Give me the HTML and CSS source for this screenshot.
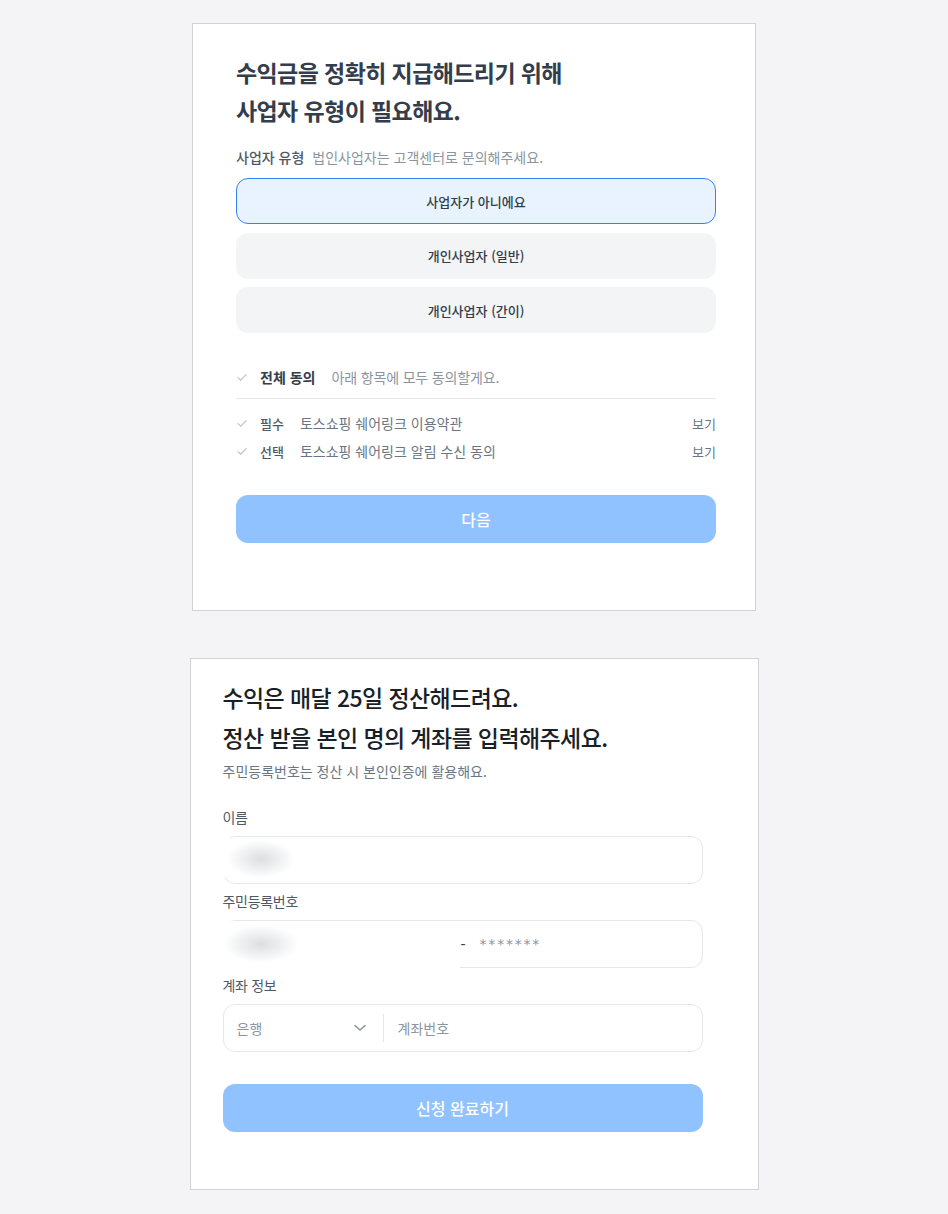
FILE: index.html
```html
<!DOCTYPE html>
<html lang="ko">
<head>
<meta charset="utf-8">
<title>정산 정보 입력</title>
<link rel="stylesheet" href="styles.css">
</head>
<body>
<main class="page">
  <section class="card card-type">
    <h1 class="title">수익금을 정확히 지급해드리기 위해<br>사업자 유형이 필요해요.</h1>
    <div class="type-label">
      <span class="type-label-main">사업자 유형</span>
      <span class="type-label-sub">법인사업자는 고객센터로 문의해주세요.</span>
    </div>
    <div class="options">
      <button class="option option-selected" type="button">사업자가 아니에요</button>
      <button class="option" type="button">개인사업자 (일반)</button>
      <button class="option" type="button">개인사업자 (간이)</button>
    </div>
    <div class="agree">
      <div class="agree-row">
        <svg class="check" width="14" height="14" viewBox="0 0 14 14"><path d="M2 7.6 L4.7 10.2 L10 4.8" fill="none" stroke="#c4c9cf" stroke-width="1.3" stroke-linecap="round" stroke-linejoin="round"/></svg>
        <span class="agree-title">전체 동의</span>
        <span class="agree-desc">아래 항목에 모두 동의할게요.</span>
      </div>
      <div class="divider"></div>
      <div class="agree-list">
        <div class="agree-row">
          <svg class="check" width="14" height="14" viewBox="0 0 14 14"><path d="M2 7.6 L4.7 10.2 L10 4.8" fill="none" stroke="#c4c9cf" stroke-width="1.3" stroke-linecap="round" stroke-linejoin="round"/></svg>
          <span class="agree-tag">필수</span>
          <span class="agree-text">토스쇼핑 쉐어링크 이용약관</span>
          <span class="agree-view">보기</span>
        </div>
        <div class="agree-row">
          <svg class="check" width="14" height="14" viewBox="0 0 14 14"><path d="M2 7.6 L4.7 10.2 L10 4.8" fill="none" stroke="#c4c9cf" stroke-width="1.3" stroke-linecap="round" stroke-linejoin="round"/></svg>
          <span class="agree-tag">선택</span>
          <span class="agree-text">토스쇼핑 쉐어링크 알림 수신 동의</span>
          <span class="agree-view">보기</span>
        </div>
      </div>
    </div>
    <button class="primary primary-type" type="button">다음</button>
  </section>

  <section class="card card-account">
    <h2 class="title-lg">수익은 매달 25일 정산해드려요.<br>정산 받을 본인 명의 계좌를 입력해주세요.</h2>
    <p class="subtitle">주민등록번호는 정산 시 본인인증에 활용해요.</p>
    <div class="fields">
      <div class="field">
        <div class="field-label">이름</div>
        <div class="input">
          <div class="mask mask-name"></div>
        </div>
      </div>
      <div class="field">
        <div class="field-label">주민등록번호</div>
        <div class="input input-rrn">
          <span class="rrn-dash">-</span>
          <span class="rrn-back">*******</span>
          <div class="mask mask-rrn"></div>
        </div>
      </div>
      <div class="field">
        <div class="field-label">계좌 정보</div>
        <div class="input">
          <div class="bank">
            <span class="placeholder">은행</span>
            <svg class="chevron" width="12" height="8" viewBox="0 0 12 8"><path d="M1 1.6 L6 6 L11 1.6" fill="none" stroke="#8b95a1" stroke-width="1.5" stroke-linecap="round" stroke-linejoin="round"/></svg>
          </div>
          <div class="vline"></div>
          <span class="placeholder account">계좌번호</span>
        </div>
      </div>
    </div>
    <button class="primary primary-account" type="button">신청 완료하기</button>
  </section>
</main>
</body>
</html>
```

FILE: styles.css
```css
* {
  box-sizing: border-box;
}

body {
  margin: 0;
  background: #f4f4f6;
  font-family: "Noto Sans CJK KR", "Noto Sans", sans-serif;
  color: #333d4b;
}

.page {
  display: flex;
  flex-direction: column;
  align-items: center;
  padding: 23px 0 24px;
  gap: 47px;
}

.card {
  background: #ffffff;
  border: 1px solid #d1d3d7;
}

/* ---------- card 1 ---------- */
.card-type {
  width: 564px;
  padding: 29px 39px 67px 43px;
}

.title {
  margin: 0;
  font-size: 23px;
  line-height: 38px;
  font-weight: 700;
  letter-spacing: -0.6px;
  color: #333d4b;
}

.type-label {
  margin-top: 18px;
  display: flex;
  align-items: center;
  gap: 8px;
  font-size: 14px;
  line-height: 20px;
}

.type-label-main {
  color: #4e5968;
  font-weight: 500;
}

.type-label-sub {
  color: #8b95a1;
}

.options {
  margin-top: 11px;
  display: flex;
  flex-direction: column;
  gap: 8.5px;
}

.option {
  height: 46px;
  border: 1px solid transparent;
  border-radius: 12px;
  background: #f2f4f6;
  font-family: inherit;
  font-size: 13px;
  font-weight: 500;
  color: #333d4b;
  padding: 0;
}

.option-selected {
  background: #e8f3ff;
  border-color: #3182f6;
}

.agree {
  margin-top: 34px;
}

.agree-row {
  display: flex;
  align-items: center;
  height: 20px;
  font-size: 14px;
}

.check {
  margin-right: 10px;
  flex: none;
}

.agree-title {
  font-size: 14px;
  font-weight: 700;
  color: #333d4b;
  margin-right: 16px;
}

.agree-desc {
  color: #8b95a1;
  letter-spacing: -0.15px;
}

.divider {
  margin: 11px 0 14px;
  height: 1px;
  background: #e5e8eb;
}

.agree-list {
  display: flex;
  flex-direction: column;
  gap: 8px;
}

.agree-tag {
  font-size: 13px;
  font-weight: 500;
  color: #4e5968;
  margin-right: 16px;
}

.agree-text {
  color: #6b7684;
  flex: 1;
}

.agree-view {
  font-size: 13px;
  color: #6b7684;
}

.primary {
  display: block;
  width: 100%;
  height: 48px;
  border: none;
  border-radius: 12px;
  background: #90c2ff;
  color: #ffffff;
  font-family: inherit;
  font-size: 16px;
  font-weight: 500;
  padding: 0;
}

.primary-type {
  margin-top: 34px;
}

/* ---------- card 2 ---------- */
.card-account {
  width: 569px;
  padding: 18px 55px 57px 32px;
}

.title-lg {
  margin: 0;
  font-size: 23px;
  line-height: 40px;
  font-weight: 500;
  letter-spacing: -0.6px;
  color: #191f28;
}

.subtitle {
  margin: 4px 0 0;
  font-size: 14px;
  line-height: 20px;
  color: #6b7684;
}

.fields {
  margin-top: 26px;
  display: flex;
  flex-direction: column;
  gap: 7px;
}

.field-label {
  font-size: 14px;
  line-height: 20px;
  letter-spacing: -0.3px;
  color: #4e5968;
  margin-bottom: 9px;
}

.input {
  position: relative;
  height: 48px;
  border: 1px solid #e5e8eb;
  border-radius: 12px;
  display: flex;
  align-items: center;
  font-size: 14px;
}

.mask {
  position: absolute;
  background: #ffffff;
}

.mask-name {
  left: -5px;
  top: 1px;
  width: 80px;
  height: 39px;
  background: radial-gradient(ellipse 34px 19px at 42px 21px, #dcdee1, #ffffff);
}

.mask-rrn {
  left: -5px;
  top: 0;
  width: 241px;
  height: 48px;
  background: radial-gradient(ellipse 38px 19px at 42px 23px, #dcdee1, #ffffff);
}

.rrn-dash {
  margin-left: 237px;
  font-family: "DejaVu Sans", sans-serif;
  font-size: 14px;
  color: #333d4b;
}

.rrn-back {
  margin-left: 14px;
  font-family: "DejaVu Sans", sans-serif;
  font-size: 14px;
  color: #8b95a1;
  letter-spacing: 1.8px;
}

.bank {
  width: 159px;
  height: 100%;
  display: flex;
  align-items: center;
  justify-content: space-between;
  padding: 0 17px 0 13px;
}

.placeholder {
  color: #8b95a1;
}

.vline {
  width: 1px;
  height: 28px;
  background: #e5e8eb;
}

.account {
  padding-left: 14px;
}

.primary-account {
  margin-top: 32px;
}
```
